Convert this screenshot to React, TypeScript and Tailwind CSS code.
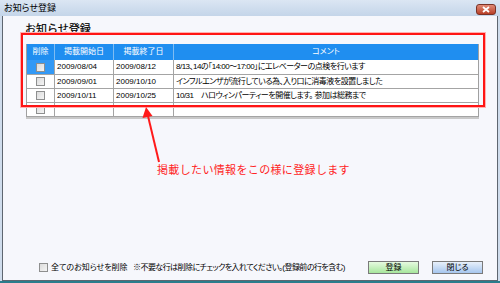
import React from "react";

const F = "font-['Liberation_Sans','Noto_Sans_CJK_JP',sans-serif] [font-feature-settings:'palt']";

function Box({ className = "" }: { className?: string }) {
  return (
    <div
      className={`shrink-0 w-[9px] h-[9px] border border-[#8e8f8f] bg-gradient-to-br from-[#dcdcdc] to-[#f4f4f4] ${className}`}
    />
  );
}

const rows = [
  { s: "2009/08/04", e: "2009/08/12", c: "8/13、14の「14:00～17:00」にエレベーターの点検を行います", sel: true, h: "h-[15px]" },
  { s: "2009/09/01", e: "2009/10/10", c: "インフルエンザが流行している為、入り口に消毒液を設置しました", sel: false, h: "h-[14px]" },
  { s: "2009/10/11", e: "2009/10/25", c: "10/31　ハロウィンパーティーを開催します。 参加は総務まで", sel: false, h: "h-[14px]" },
  { s: "", e: "", c: "", sel: false, h: "h-[14px]" },
];

export default function App() {
  return (
    <div className={`w-[500px] h-[283px] overflow-hidden flex flex-col bg-[#cfdcec] ${F}`}>
      <div className="h-[16px] shrink-0 flex items-center pl-[4px] pr-[4px] bg-gradient-to-b from-[#dbe6f3] to-[#c4d5e9]">
        <span className="text-[9px] text-black leading-none">お知らせ登録</span>
        <div className="flex-1" />
        <div className="shrink-0 mt-[2px] w-[20px] h-[11px] rounded-[3px] border border-[#7a3226] bg-gradient-to-b from-[#e08a76] to-[#b83e26] flex items-center justify-center">
          <svg width="8" height="7" viewBox="0 0 8 7">
            <path d="M1 1 L7 6 M7 1 L1 6" stroke="#ffffff" strokeWidth="1.8" />
          </svg>
        </div>
      </div>
      <div className="flex-1 min-h-0 mx-[2px] border-l border-r border-b border-[#5e6670] bg-[#f6f7fc] relative flex flex-col">
        <div className="pl-[22px] pt-[7px] h-[28px] text-[11px] leading-[13px] text-black [font-feature-settings:normal] [-webkit-text-stroke:0.2px_black]">お知らせ登録</div>
        <div className="ml-[23px] w-[453px] border-l border-r border-[#a0a0a0] shadow-[0_2px_0_#c8c8c8] text-[8px] leading-none">
          <div className="h-[16px] flex bg-[#1f8ef0] text-white">
            <div className="w-[28px] border-r border-[#7fbcf2] flex items-center justify-center">削除</div>
            <div className="w-[59px] border-r border-[#7fbcf2] flex items-center justify-center">掲載開始日</div>
            <div className="w-[60px] border-r border-[#7fbcf2] flex items-center justify-center">掲載終了日</div>
            <div className="flex-1 flex items-center justify-center">コメント</div>
          </div>
          {rows.map((r, i) => (
            <div key={i} className={`${r.h} flex bg-white border-b border-[#a4a4a4] text-black`}>
              <div className={`w-[28px] border-r border-[#a4a4a4] flex items-center justify-center ${r.sel ? "bg-[#3399f5]" : ""}`}>
                <Box />
              </div>
              <div className="w-[59px] border-r border-[#a4a4a4] flex items-center pl-[2px]">{r.s}</div>
              <div className="w-[60px] border-r border-[#a4a4a4] flex items-center pl-[2px]">{r.e}</div>
              <div className="flex-1 flex items-center pl-[2px] whitespace-nowrap tracking-[-0.5px]">{r.c}</div>
            </div>
          ))}
        </div>
        <div className="flex-1" />
        <div className="flex items-center pl-[36px] pr-[14px] pb-[6px] text-[8px] leading-none text-black">
          <Box />
          <div className="ml-[3px] w-[82px]">全てのお知らせを削除</div>
          <div className="tracking-[-0.55px]">※不要な行は削除にチェックを入れてください。(登録前の行を含む)</div>
          <div className="ml-auto w-[51px] h-[13px] border border-[#7a7a7a] bg-gradient-to-b from-[#e6fae0] to-[#a6e69c] flex items-center justify-center">登録</div>
          <div className="ml-[13px] w-[51px] h-[13px] border border-[#7a7a7a] bg-gradient-to-b from-[#e8f0fa] to-[#a6c6ee] flex items-center justify-center">閉じる</div>
        </div>

        <div className="absolute left-[18px] top-[17px] w-[464px] h-[74px] border-2 border-[#ff1414] shadow-[0_0_0_1px_#ffb0b0]" />
        <svg className="absolute left-0 top-0" width="300" height="160" viewBox="0 0 300 160">
          <line x1="156" y1="146" x2="145" y2="100" stroke="#ff1a1a" strokeWidth="2" />
          <polygon points="143,91 139.5,102 149.5,100" fill="#ff1a1a" />
        </svg>
        <div className="absolute left-[154px] top-[147px] text-[11px] leading-[14px] tracking-[0.35px] text-[#ff2424] [font-feature-settings:normal]">
          掲載したい情報をこの様に登録します
        </div>
      </div>
      <div className="h-[2px] shrink-0 bg-[#2a7c8c]" />
    </div>
  );
}
